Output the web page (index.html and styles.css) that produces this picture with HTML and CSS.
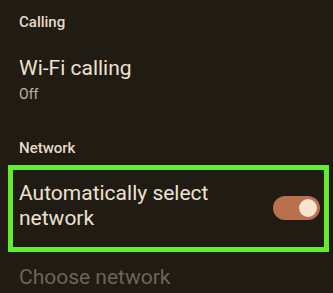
FILE: index.html
```html
<!DOCTYPE html>
<html>
<head>
<meta charset="utf-8">
<link rel="stylesheet" href="styles.css">
</head>
<body>
<div class="screen">
  <div class="section-title first">Calling</div>
  <div class="item">
    <div class="item-title">Wi-Fi calling</div>
    <div class="item-sub">Off</div>
  </div>
  <div class="section-title second">Network</div>
  <div class="highlight">
    <div class="item-title wrap">Automatically select<br>network</div>
    <div class="toggle"><div class="thumb"></div></div>
  </div>
  <div class="item-title disabled">Choose network</div>
</div>
</body>
</html>
```
FILE: styles.css
```css
html, body {
  margin: 0;
  padding: 0;
  background: #201b13;
}
.screen {
  width: 333px;
  height: 293px;
  overflow: hidden;
  display: flex;
  flex-direction: column;
  font-family: Roboto, "Noto Sans", sans-serif;
  color: #ece2d2;
}
.section-title {
  font-size: 15px;
  line-height: 20px;
  font-weight: 500;
  color: #e6dac8;
  padding-left: 19px;
}
.first { margin-top: 12px; }
.second { margin-top: 34px; }
.item {
  display: flex;
  flex-direction: column;
  padding-left: 19px;
  margin-top: 22px;
}
.item-title {
  font-size: 21px;
  line-height: 28px;
  color: #ece2d2;
}
.item-sub {
  font-size: 14px;
  line-height: 20px;
  color: #c2b6a2;
  margin-top: 2px;
}
.highlight {
  margin: 7px 4px 0 8px;
  border: 5px solid #62ee2e;
  display: flex;
  align-items: center;
  justify-content: space-between;
  padding: 11px 4px 16px 6px;
}
.wrap {
  line-height: 25px;
}
.toggle {
  width: 47px;
  height: 24px;
  border-radius: 12px;
  background: #b8714b;
  display: flex;
  align-items: center;
  justify-content: flex-end;
  padding-right: 3px;
  box-sizing: border-box;
  margin-top: 3px;
}
.thumb {
  width: 18px;
  height: 18px;
  border-radius: 50%;
  background: #fde2cf;
}
.disabled {
  color: #6c6559;
  padding-left: 19px;
  margin-top: 11px;
}
```
